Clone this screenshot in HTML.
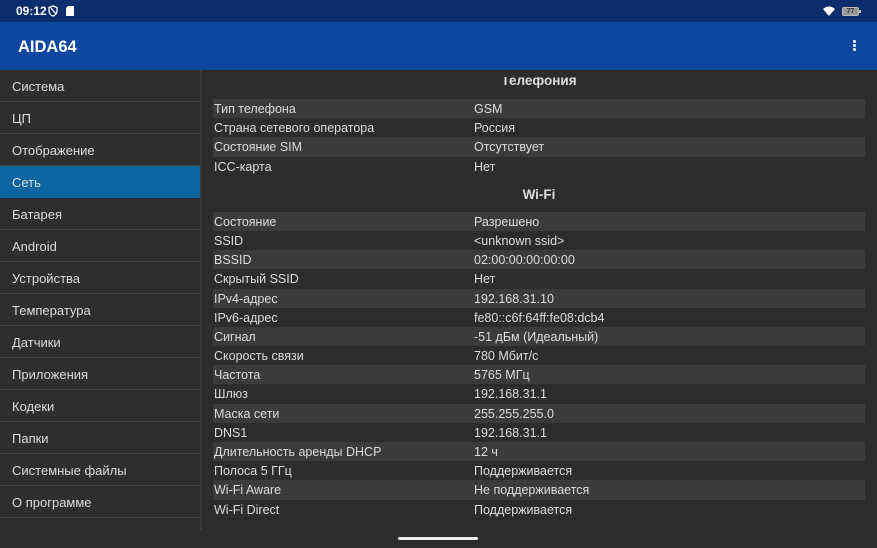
<!DOCTYPE html><html><head><meta charset="utf-8"><style>
*{margin:0;padding:0;box-sizing:border-box}
body{width:877px;height:548px;background:#2c2c2c;font-family:"Liberation Sans",sans-serif;position:relative;overflow:hidden;color:#ddd}
#sb{position:absolute;left:0;top:0;width:877px;height:22px;background:#0b2d6b;color:#fff;font-size:12px;font-weight:bold}
#ab{position:absolute;left:0;top:22px;width:877px;height:48px;background:#0d47a1;color:#fff}
#ab h1{position:absolute;left:18px;top:16px;font-size:16.5px;font-weight:bold}
#side{position:absolute;left:0;top:70px;width:202px;height:460px;background:#2e2e2e;border-right:2px solid #3a3a3a}
.it{height:32px;border-bottom:1px solid #444;font-size:13px;line-height:33px;padding-left:12px;color:#ddd}
.it.sel{background:#0c64a0;border-bottom-color:#0c64a0}
#ct{position:absolute;left:213px;top:71px;width:652px;font-size:12.5px}
.r{height:19.2px;line-height:20px;position:relative;padding-left:1px}
.r.s{background:#3b3b3b}
.r span{position:absolute;left:261px}
.h{text-align:center;font-weight:bold;font-size:13.5px;color:#ddd}
</style></head><body>
<div id="sb"><span style="position:absolute;left:16px;top:4px">09:12</span>
<svg style="position:absolute;left:48px;top:5px" width="10" height="12" viewBox="0 0 10 12"><path d="M5 1L9 2.5V6C9 8.5 7 10.5 5 11 3 10.5 1 8.5 1 6V2.5Z M3 3L8 9" fill="none" stroke="#fff" stroke-width="1.3"/></svg>
<svg style="position:absolute;left:66px;top:6px" width="8" height="10"><path d="M0 2L2 0H8V10H0Z" fill="#fff"/></svg>
<svg style="position:absolute;left:823px;top:6px" width="12" height="10" viewBox="0 0 12 10"><path d="M0 3Q6 -2 12 3L6 10Z" fill="#fff"/></svg>
<div style="position:absolute;left:842px;top:7px;width:17px;height:9px;border:1px solid #bbb;border-radius:2px;font-size:7px;line-height:7px;text-align:center;background:#999;color:#333">77</div>
<div style="position:absolute;left:859px;top:10px;width:2px;height:3px;background:#bbb"></div></div>
<div id="ab"><h1>AIDA64</h1>
<div style="position:absolute;left:853px;top:18px;width:3px;height:3px;background:#fff;border-radius:50%;box-shadow:0 4px #fff,0 8px #fff"></div></div>
<div id="side">
<div class="it">Система</div><div class="it">ЦП</div><div class="it">Отображение</div><div class="it sel">Сеть</div><div class="it">Батарея</div><div class="it">Android</div><div class="it">Устройства</div><div class="it">Температура</div><div class="it">Датчики</div><div class="it">Приложения</div><div class="it">Кодеки</div><div class="it">Папки</div><div class="it">Системные файлы</div><div class="it">О программе</div>
</div>
<div id="ct">
<div style="margin-top:6px;height:12px;overflow:hidden;position:relative"><div class="h" style="position:absolute;top:-4px;width:100%">Телефония</div></div>
<div style="height:10px"></div>
<div class="r s">Тип телефона<span>GSM</span></div>
<div class="r">Страна сетевого оператора<span>Россия</span></div>
<div class="r s">Состояние SIM<span>Отсутствует</span></div>
<div class="r">ICC-карта<span>Нет</span></div>
<div class="h" style="height:36px;line-height:37px;">Wi-Fi</div>
<div class="r s">Состояние<span>Разрешено</span></div>
<div class="r">SSID<span>&lt;unknown ssid&gt;</span></div>
<div class="r s">BSSID<span>02:00:00:00:00:00</span></div>
<div class="r">Скрытый SSID<span>Нет</span></div>
<div class="r s">IPv4-адрес<span>192.168.31.10</span></div>
<div class="r">IPv6-адрес<span>fe80::c6f:64ff:fe08:dcb4</span></div>
<div class="r s">Сигнал<span>-51 дБм (Идеальный)</span></div>
<div class="r">Скорость связи<span>780 Мбит/с</span></div>
<div class="r s">Частота<span>5765 МГц</span></div>
<div class="r">Шлюз<span>192.168.31.1</span></div>
<div class="r s">Маска сети<span>255.255.255.0</span></div>
<div class="r">DNS1<span>192.168.31.1</span></div>
<div class="r s">Длительность аренды DHCP<span>12 ч</span></div>
<div class="r">Полоса 5 ГГц<span>Поддерживается</span></div>
<div class="r s">Wi-Fi Aware<span>Не поддерживается</span></div>
<div class="r">Wi-Fi Direct<span>Поддерживается</span></div>
</div>
<div style="position:absolute;left:398px;top:537px;width:80px;height:3px;background:#eee;border-radius:2px"></div>
</body></html>
